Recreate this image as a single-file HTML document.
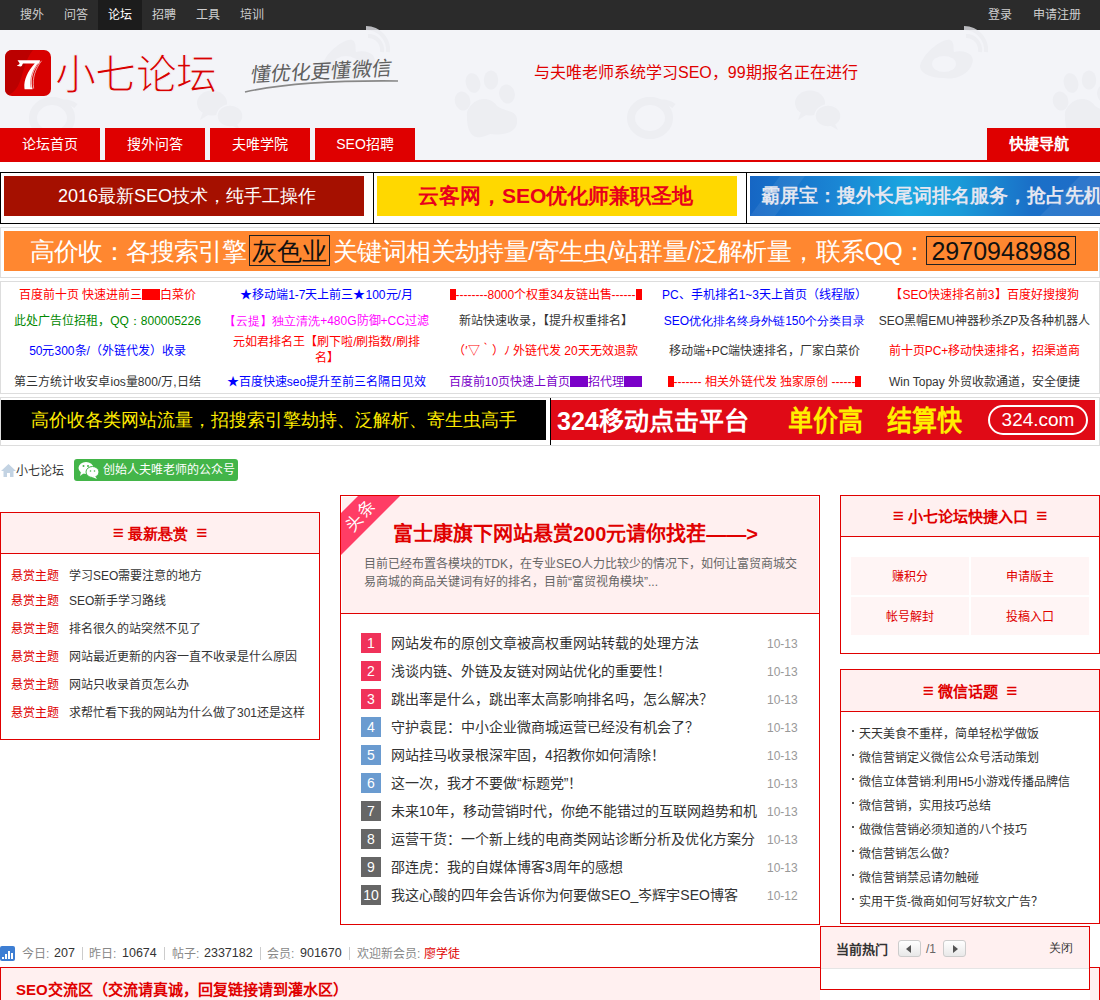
<!DOCTYPE html>
<html lang="zh-CN"><head><meta charset="utf-8">
<style>
*{margin:0;padding:0;box-sizing:border-box}
html,body{width:1100px;height:1000px;overflow:hidden;background:#fff}
body{position:relative;font-family:"Liberation Sans",sans-serif;font-size:12px;color:#333;line-height:14px}
.a{position:absolute;white-space:nowrap}
/* topbar */
#top{position:absolute;left:0;top:0;width:1100px;height:30px;background:#2b2b2b}
#top .it{position:absolute;top:8px;color:#cfcfcf;font-size:12px;line-height:14px}
#top .act{position:absolute;left:98px;top:0;width:44px;height:30px;background:#1c1c1c}
/* header */
#hd{position:absolute;left:0;top:30px;width:1100px;height:130px;background:#f3f4f8;overflow:hidden}
.tab{position:absolute;top:128px;height:32px;width:100px;background:#df0000;color:#fff;font-size:14px;line-height:32px;text-align:center}
#redline{position:absolute;left:0;top:160px;width:1100px;height:2px;background:#df0000}
/* ad row */
.cell{position:absolute;top:172px;height:52px;border:1px solid #000}
.bn{position:absolute;top:176px;height:40px;width:360px;overflow:hidden}
.box{position:absolute;border:1px solid #ddd}
.lk{position:absolute;width:219px;text-align:center;font-size:12px;line-height:16px;white-space:nowrap;padding-top:1px}
/* panels */
.pnl{position:absolute;border:1px solid #e00000;background:#fff}
.ph{position:absolute;left:0;top:0;right:0;background:#fff0f0;border-bottom:1px solid #e00000;color:#e00000;font-weight:bold;font-size:15px;text-align:center}
.eq{font-size:19px;font-weight:normal}
</style></head><body>

<!-- TOP BAR -->
<div id="top">
  <div class="act"></div>
  <span class="it" style="left:20px">搜外</span>
  <span class="it" style="left:64px">问答</span>
  <span class="it" style="left:108px;color:#fff">论坛</span>
  <span class="it" style="left:152px">招聘</span>
  <span class="it" style="left:196px">工具</span>
  <span class="it" style="left:240px">培训</span>
  <span class="it" style="left:988px">登录</span>
  <span class="it" style="left:1033px">申请注册</span>
</div>

<!-- HEADER -->
<div id="hd"></div>
<svg class="a" style="left:0;top:0;opacity:0.75" width="1100" height="160"><g fill="#ebecf1">
  <!-- google g -->
  <ellipse cx="52" cy="118" rx="19" ry="17" fill="none" stroke="#ebecf1" stroke-width="8"/>
  <path d="M58 103 Q 68 100 76 106" stroke="#ebecf1" stroke-width="5" fill="none"/>
  <!-- wechat -->
  <ellipse cx="212" cy="103" rx="15" ry="12.5"/>
  <path d="M203 112 l-3 8 l8 -5 z"/>
  <ellipse cx="230" cy="116" rx="13" ry="11" stroke="#f3f4f8" stroke-width="1.5"/>
  <path d="M237 124 l3 6 l-7 -4 z"/>
  <!-- weibo -->
  <path d="M322 66 C 326 52, 345 38, 352 40 C 357 42, 355 50, 356 52 C 368 49, 378 56, 374 64 C 370 76, 355 80, 346 78 C 330 78, 322 72, 322 66 Z"/>
  <ellipse cx="346" cy="64" rx="12" ry="8" fill="#f3f4f8"/>
  <path d="M368 36 a 14 14 0 0 1 14 16" stroke="#ebecf1" stroke-width="4" fill="none"/>
  <path d="M366 28 a 22 22 0 0 1 22 24" stroke="#ebecf1" stroke-width="4" fill="none"/>
  <!-- paw -->
  <ellipse cx="473" cy="83" rx="7.2" ry="10" transform="rotate(-15 473 83)"/>
  <ellipse cx="491" cy="80" rx="7.2" ry="9.5"/>
  <ellipse cx="507" cy="94" rx="7.7" ry="9.5" transform="rotate(-15 507 94)"/>
  <ellipse cx="462.5" cy="101" rx="7.7" ry="9.5" transform="rotate(-15 462.5 101)"/>
  <path d="M467 112 C 474 96, 490 96, 497 106 C 505 112, 517 110, 517 120 C 518 132, 505 136, 490 134 C 478 140, 466 140, 467 112 Z"/>
</g><g fill="#ebecf1">
  <!-- google g -->
  <ellipse cx="650" cy="118" rx="19" ry="17" fill="none" stroke="#ebecf1" stroke-width="8"/>
  <path d="M656 103 Q 666 100 674 106" stroke="#ebecf1" stroke-width="5" fill="none"/>
  <!-- wechat -->
  <ellipse cx="810" cy="103" rx="15" ry="12.5"/>
  <path d="M801 112 l-3 8 l8 -5 z"/>
  <ellipse cx="828" cy="116" rx="13" ry="11" stroke="#f3f4f8" stroke-width="1.5"/>
  <path d="M835 124 l3 6 l-7 -4 z"/>
  <!-- weibo -->
  <path d="M920 66 C 924 52, 943 38, 950 40 C 955 42, 953 50, 954 52 C 966 49, 976 56, 972 64 C 968 76, 953 80, 944 78 C 928 78, 920 72, 920 66 Z"/>
  <ellipse cx="944" cy="64" rx="12" ry="8" fill="#f3f4f8"/>
  <path d="M966 36 a 14 14 0 0 1 14 16" stroke="#ebecf1" stroke-width="4" fill="none"/>
  <path d="M964 28 a 22 22 0 0 1 22 24" stroke="#ebecf1" stroke-width="4" fill="none"/>
  <!-- paw -->
  <ellipse cx="1071" cy="83" rx="7.2" ry="10" transform="rotate(-15 1071 83)"/>
  <ellipse cx="1089" cy="80" rx="7.2" ry="9.5"/>
  <ellipse cx="1105" cy="94" rx="7.7" ry="9.5" transform="rotate(-15 1105 94)"/>
  <ellipse cx="1060.5" cy="101" rx="7.7" ry="9.5" transform="rotate(-15 1060.5 101)"/>
  <path d="M1065 112 C 1072 96, 1088 96, 1095 106 C 1103 112, 1115 110, 1115 120 C 1116 132, 1103 136, 1088 134 C 1076 140, 1064 140, 1065 112 Z"/>
</g></svg>
<svg class="a" style="left:5px;top:50px" width="46" height="46" viewBox="0 0 46 46">
  <defs><clipPath id="lc"><rect x="0" y="0" width="46" height="46" rx="7" ry="7"/></clipPath></defs>
  <g clip-path="url(#lc)">
    <rect x="0" y="0" width="46" height="46" fill="#d80000"/>
    <path d="M0 0 H28 C 20 9, 18 26, 13 36 C 10 41, 6 44, 2 46 H0 Z" fill="#bb0000"/>
  </g>
  <path d="M12.5 10.3 H35 L34.6 12.6 C 28.5 20, 25.5 28, 27.2 37.3 L27.6 39.2 H19.6 L19.4 37.8 C 18.8 30, 22.5 21.5, 29.8 13.6 H18 C 17 14.5, 17.5 16.6, 15.5 16.4 C 13.5 16.2, 12 15.8, 12 15 C 13.5 15, 14.6 14.2, 14.6 13.2 Z" fill="#fff"/>
  <path d="M36.5 10.8 C 30.5 19, 27 27.5, 28.7 38.6" stroke="#fff" stroke-width="0.6" fill="none"/>
  <path d="M33 13.5 C 27.5 20.5, 24.8 28, 26 37.5" stroke="#d80000" stroke-width="0.5" fill="none"/>
</svg>
<div class="a" style="left:55px;top:50px;font-size:41px;line-height:50px;color:#d80000;letter-spacing:-0.7px;-webkit-text-stroke:1.1px #f3f4f8">小七论坛</div>
<div class="a" style="left:249px;top:62px;font-size:20px;line-height:26px;color:#606060;transform:skewX(-10deg) rotate(-3deg);transform-origin:0 100%">懂优化更懂微信</div>
<svg class="a" style="left:240px;top:76px" width="165" height="20"><path d="M5 16 Q 60 4 158 5" stroke="#888" stroke-width="1.6" fill="none"/></svg>
<div class="a" style="left:534px;top:64px;font-size:16px;line-height:18px;color:#e00000">与夫唯老师系统学习SEO，99期报名正在进行</div>

<!-- NAV -->
<div class="tab" style="left:0">论坛首页</div>
<div class="tab" style="left:105px">搜外问答</div>
<div class="tab" style="left:210px">夫唯学院</div>
<div class="tab" style="left:315px">SEO招聘</div>
<div class="tab" style="left:987px;width:113px;font-weight:bold;font-size:15px;line-height:31px;text-align:left;padding-left:22px">快捷导航</div>
<div id="redline"></div>

<!-- AD ROW 1 -->
<div class="cell" style="left:0;width:374px"></div>
<div class="cell" style="left:373px;width:374px"></div>
<div class="cell" style="left:746px;width:380px"></div>
<div lang="ja" class="bn" style="left:4px;background:#a51000;color:#fff;font-size:18px;line-height:40px;font-weight:300"><span class="a" style="left:54px;top:0">2016最新SEO技术，纯手工操作</span></div>
<div lang="ja" class="bn" style="left:377px;background:#ffd800;color:#e8001c;font-size:21px;line-height:40px;font-weight:bold"><span class="a" style="left:41px;top:0">云客网，SEO优化师兼职圣地</span></div>
<div lang="ja" class="bn" style="left:750px;width:350px;background:linear-gradient(90deg,#1666c4 0%,#1a86d4 25%,#1aa6e0 45%,#1a9ad8 60%,#1a70c8 80%,#1f6cc8 100%);color:#e4e6f0;font-size:19px;line-height:40px;font-weight:bold"><svg class="a" style="left:0;top:0" width="350" height="40"><polygon points="0,40 30,0 55,0 25,40" fill="rgba(255,255,255,0.07)"/><polygon points="290,40 330,0 350,0 350,40" fill="rgba(255,255,255,0.08)"/></svg><span class="a" style="left:11px;top:0">霸屏宝：搜外长尾词排名服务，抢占先机</span></div>

<!-- ORANGE -->
<div class="box" style="left:0;top:227px;width:1100px;height:51px"></div>
<div lang="ja" class="a" style="left:4px;top:231px;width:1094px;height:40px;background:#ff8730;color:#fff;font-size:25px;line-height:40px;font-weight:300">
  <span class="a" style="left:26px;top:0;letter-spacing:-0.95px">高价收：各搜索引擎</span>
  <span class="a" style="left:244.5px;top:4px;width:81px;height:31px;border:1px solid #222;color:#111;line-height:30px;text-align:center">灰色业</span>
  <span class="a" style="left:329px;top:0;letter-spacing:-0.6px">关键词相关劫持量/寄生虫/站群量/泛解析量，联系QQ：</span>
  <span class="a" style="left:922px;top:5px;width:150px;height:29px;border:1px solid #222;color:#111;line-height:28px;text-align:center">2970948988</span>
</div>

<!-- TEXT LINKS -->
<div class="box" style="left:0;top:281px;width:1100px;height:113px"></div>
<div class="lk" style="left:-2px;top:286px;color:#f00">百度前十页 快速进前三<span style="display:inline-block;width:18px;height:11px;background:#f00;vertical-align:-1px"></span>白菜价</div>
<div class="lk" style="left:217px;top:286px;color:#00f">★移动端1-7天上前三★100元/月</div>
<div class="lk" style="left:436px;top:286px;color:#f00"><span style="display:inline-block;width:6px;height:11px;background:#f00;vertical-align:-1px"></span>--------8000个权重34友链出售------<span style="display:inline-block;width:6px;height:11px;background:#f00;vertical-align:-1px"></span></div>
<div class="lk" style="left:655px;top:286px;color:#00f">PC、手机排名1~3天上首页（线程版）</div>
<div class="lk" style="left:875px;top:286px;color:#f00">【SEO快速排名前3】百度好搜搜狗</div>

<div class="lk" style="left:-2px;top:312px;color:#080">此处广告位招租，QQ：800005226</div>
<div class="lk" style="left:217px;top:312px;color:#f0f">【云提】独立清洗+480G防御+CC过滤</div>
<div class="lk" style="left:436px;top:312px;color:#333">新站快速收录，【提升权重排名】</div>
<div class="lk" style="left:655px;top:312px;color:#00f">SEO优化排名终身外链150个分类目录</div>
<div class="lk" style="left:875px;top:312px;color:#333">SEO黑帽EMU神器秒杀ZP及各种机器人</div>

<div class="lk" style="left:-2px;top:342px;color:#00f">50元300条/（外链代发）收录</div>
<div class="lk" style="left:217px;top:334px;color:#f00;white-space:normal;padding:0 10px">元如君排名王【刷下啦/刷指数/刷排名】</div>
<div class="lk" style="left:436px;top:342px;color:#f00">（′▽｀）ﾉ 外链代发 20天无效退款</div>
<div class="lk" style="left:655px;top:342px;color:#333">移动端+PC端快速排名，厂家白菜价</div>
<div class="lk" style="left:875px;top:342px;color:#f00">前十页PC+移动快速排名，招渠道商</div>

<div class="lk" style="left:-2px;top:373px;color:#333">第三方统计收安卓ios量800/万,日结</div>
<div class="lk" style="left:217px;top:373px;color:#00f">★百度快速seo提升至前三名隔日见效</div>
<div class="lk" style="left:436px;top:373px;color:#7a00c8">百度前10页快速上首页<span style="display:inline-block;width:18px;height:11px;background:#7a00c8;vertical-align:-1px"></span>招代理<span style="display:inline-block;width:18px;height:11px;background:#7a00c8;vertical-align:-1px"></span></div>
<div class="lk" style="left:655px;top:373px;color:#f00"><span style="display:inline-block;width:6px;height:11px;background:#f00;vertical-align:-1px"></span>------- 相关外链代发 独家原创 ------<span style="display:inline-block;width:6px;height:11px;background:#f00;vertical-align:-1px"></span></div>
<div class="lk" style="left:875px;top:373px;color:#333">Win Topay 外贸收款通道，安全便捷</div>

<!-- BANNER ROW 2 -->
<div class="box" style="left:0;top:397px;width:1100px;height:49px"></div>
<div lang="ja" class="a" style="left:1px;top:400px;width:545px;height:40px;background:#000;color:#ffec00;font-size:18px;line-height:40px"><span class="a" style="left:30px;top:0">高价收各类网站流量，招搜索引擎劫持、泛解析、寄生虫高手</span></div>
<div class="a" style="left:550px;top:398px;width:1px;height:47px;background:#000"></div>
<div class="a" style="left:551px;top:400px;width:544px;height:40px;background:#e00a16;overflow:hidden">
  <span class="a" style="left:6px;top:0;color:#fff;font-size:25px;line-height:42px;font-weight:bold">324移动点击平台</span>
  <span class="a" style="left:237px;top:0;color:#ffee00;font-size:25px;line-height:42px;font-weight:bold;transform:scaleY(1.15)">单价高</span>
  <span class="a" style="left:336px;top:0;color:#ffee00;font-size:25px;line-height:42px;font-weight:bold;transform:scaleY(1.15)">结算快</span>
  <span class="a" style="left:437px;top:5px;width:100px;height:30px;border:2px solid #fff;border-radius:15px;color:#fff;font-size:19px;line-height:26px;text-align:center">324.com</span>
</div>

<!-- BREADCRUMB -->
<svg class="a" style="left:1px;top:464px" width="15" height="14" viewBox="0 0 15 14"><path d="M7.5 0 L15 7 L12.5 7 L12.5 13 L9 13 L9 9 L6 9 L6 13 L2.5 13 L2.5 7 L0 7 Z" fill="#c3d3e3"/></svg>
<div class="a" style="left:16px;top:464px;color:#333">小七论坛</div>
<div class="a" style="left:74px;top:459px;width:164px;height:22px;background:#43b549;border-radius:3px;color:#fff;line-height:24px">
  <svg class="a" style="left:4px;top:2px" width="22" height="18" viewBox="0 0 22 18"><ellipse cx="8" cy="7" rx="7.5" ry="6" fill="#fff"/><path d="M3 11 L2 15 L6 12 Z" fill="#fff"/><ellipse cx="14.5" cy="11" rx="6.5" ry="5.5" fill="#fff" stroke="#43b549" stroke-width="1"/><path d="M17 15 L19 18 L14 16 Z" fill="#fff"/><circle cx="5.5" cy="5" r="1" fill="#43b549"/><circle cx="10" cy="5" r="1" fill="#43b549"/><circle cx="12.5" cy="10" r="0.8" fill="#43b549"/><circle cx="16.5" cy="10" r="0.8" fill="#43b549"/></svg>
  <span class="a" style="left:29px;top:-1px">创始人夫唯老师的公众号</span>
</div>


<!-- LEFT PANEL -->
<div class="pnl" style="left:0;top:512px;width:320px;height:228px">
  <div class="ph" style="height:41px;line-height:40px"><span class="eq">≡</span> 最新悬赏 &nbsp;<span class="eq">≡</span></div>
</div>
<div class="a" style="left:11px;top:569px;line-height:14px"><span style="color:#e00000">悬赏主题</span><span style="position:absolute;left:58px">学习SEO需要注意的地方</span></div>
<div class="a" style="left:11px;top:594px;line-height:14px"><span style="color:#e00000">悬赏主题</span><span style="position:absolute;left:58px">SEO新手学习路线</span></div>
<div class="a" style="left:11px;top:622px;line-height:14px"><span style="color:#e00000">悬赏主题</span><span style="position:absolute;left:58px">排名很久的站突然不见了</span></div>
<div class="a" style="left:11px;top:650px;line-height:14px"><span style="color:#e00000">悬赏主题</span><span style="position:absolute;left:58px">网站最近更新的内容一直不收录是什么原因</span></div>
<div class="a" style="left:11px;top:678px;line-height:14px"><span style="color:#e00000">悬赏主题</span><span style="position:absolute;left:58px">网站只收录首页怎么办</span></div>
<div class="a" style="left:11px;top:706px;line-height:14px"><span style="color:#e00000">悬赏主题</span><span style="position:absolute;left:58px">求帮忙看下我的网站为什么做了301还是这样</span></div>

<!-- CENTER PANEL -->
<div class="pnl" style="left:340px;top:495px;width:480px;height:430px">
  <div style="position:absolute;left:1px;top:1px;right:1px;height:116px;background:#fff0f0"></div>
  <div style="position:absolute;left:0;top:117px;right:0;height:1px;background:#e00000"></div>
</div>
<svg class="a" style="left:341px;top:496px" width="60" height="60"><polygon points="17,0 59,0 0,59 0,17" fill="#ff3d65"/></svg>
<div class="a" style="left:340px;top:505px;width:42px;height:20px;text-align:center;color:#fff;font-size:17px;line-height:22px;letter-spacing:2px;transform:rotate(-48deg);transform-origin:50% 50%">头条</div>
</div>
<div class="a" style="left:393px;top:521px;color:#e00000;font-size:20px;line-height:26px;font-weight:bold">富士康旗下网站悬赏200元请你找茬——&gt;</div>
<div class="a" style="left:364px;top:554px;width:440px;white-space:normal;color:#666;line-height:18px;padding-top:1px">目前已经布置各模块的TDK，在专业SEO人力比较少的情况下，如何让富贸商城交易商城的商品关键词有好的排名，目前“富贸视角模块”...</div>
<div class="a" style="left:361px;top:633px;width:20px;height:20px;background:#f0325a;color:#fff;font-size:14px;line-height:20px;text-align:center">1</div>
<div class="a" style="left:391px;top:636px;font-size:14px;line-height:14px;color:#333">网站发布的原创文章被高权重网站转载的处理方法</div>
<div class="a" style="left:767px;top:638px;color:#999;line-height:12px">10-13</div>
<div class="a" style="left:361px;top:661px;width:20px;height:20px;background:#f0325a;color:#fff;font-size:14px;line-height:20px;text-align:center">2</div>
<div class="a" style="left:391px;top:664px;font-size:14px;line-height:14px;color:#333">浅谈内链、外链及友链对网站优化的重要性！</div>
<div class="a" style="left:767px;top:666px;color:#999;line-height:12px">10-13</div>
<div class="a" style="left:361px;top:689px;width:20px;height:20px;background:#f0325a;color:#fff;font-size:14px;line-height:20px;text-align:center">3</div>
<div class="a" style="left:391px;top:692px;font-size:14px;line-height:14px;color:#333">跳出率是什么，跳出率太高影响排名吗，怎么解决？</div>
<div class="a" style="left:767px;top:694px;color:#999;line-height:12px">10-13</div>
<div class="a" style="left:361px;top:717px;width:20px;height:20px;background:#6a9bd0;color:#fff;font-size:14px;line-height:20px;text-align:center">4</div>
<div class="a" style="left:391px;top:720px;font-size:14px;line-height:14px;color:#333">守护袁昆：中小企业微商城运营已经没有机会了？</div>
<div class="a" style="left:767px;top:722px;color:#999;line-height:12px">10-13</div>
<div class="a" style="left:361px;top:745px;width:20px;height:20px;background:#6a9bd0;color:#fff;font-size:14px;line-height:20px;text-align:center">5</div>
<div class="a" style="left:391px;top:748px;font-size:14px;line-height:14px;color:#333">网站挂马收录根深牢固，4招教你如何清除！</div>
<div class="a" style="left:767px;top:750px;color:#999;line-height:12px">10-13</div>
<div class="a" style="left:361px;top:773px;width:20px;height:20px;background:#6a9bd0;color:#fff;font-size:14px;line-height:20px;text-align:center">6</div>
<div class="a" style="left:391px;top:776px;font-size:14px;line-height:14px;color:#333">这一次，我才不要做“标题党”！</div>
<div class="a" style="left:767px;top:778px;color:#999;line-height:12px">10-13</div>
<div class="a" style="left:361px;top:801px;width:20px;height:20px;background:#666;color:#fff;font-size:14px;line-height:20px;text-align:center">7</div>
<div class="a" style="left:391px;top:804px;font-size:14px;line-height:14px;color:#333">未来10年，移动营销时代，你绝不能错过的互联网趋势和机</div>
<div class="a" style="left:767px;top:806px;color:#999;line-height:12px">10-13</div>
<div class="a" style="left:361px;top:829px;width:20px;height:20px;background:#666;color:#fff;font-size:14px;line-height:20px;text-align:center">8</div>
<div class="a" style="left:391px;top:832px;font-size:14px;line-height:14px;color:#333">运营干货：一个新上线的电商类网站诊断分析及优化方案分</div>
<div class="a" style="left:767px;top:834px;color:#999;line-height:12px">10-13</div>
<div class="a" style="left:361px;top:857px;width:20px;height:20px;background:#666;color:#fff;font-size:14px;line-height:20px;text-align:center">9</div>
<div class="a" style="left:391px;top:860px;font-size:14px;line-height:14px;color:#333">邵连虎：我的自媒体博客3周年的感想</div>
<div class="a" style="left:767px;top:862px;color:#999;line-height:12px">10-13</div>
<div class="a" style="left:361px;top:885px;width:20px;height:20px;background:#666;color:#fff;font-size:14px;line-height:20px;text-align:center">10</div>
<div class="a" style="left:391px;top:888px;font-size:14px;line-height:14px;color:#333">我这心酸的四年会告诉你为何要做SEO_岑辉宇SEO博客</div>
<div class="a" style="left:767px;top:890px;color:#999;line-height:12px">10-12</div>

<!-- RIGHT PANEL 1 -->
<div class="pnl" style="left:840px;top:495px;width:260px;height:159px">
  <div class="ph" style="height:41px;line-height:40px"><span class="eq">≡</span> 小七论坛快捷入口 &nbsp;<span class="eq">≡</span></div>
</div>
<div class="a" style="left:851px;top:557px;width:118px;height:38px;background:#fff5f5;color:#e00000;text-align:center;line-height:40px">赚积分</div>
<div class="a" style="left:971px;top:557px;width:118px;height:38px;background:#fff5f5;color:#e00000;text-align:center;line-height:40px">申请版主</div>
<div class="a" style="left:851px;top:597px;width:118px;height:38px;background:#fff5f5;color:#e00000;text-align:center;line-height:40px">帐号解封</div>
<div class="a" style="left:971px;top:597px;width:118px;height:38px;background:#fff5f5;color:#e00000;text-align:center;line-height:40px">投稿入口</div>

<!-- RIGHT PANEL 2 -->
<div class="pnl" style="left:840px;top:669px;width:260px;height:255px">
  <div class="ph" style="height:42px;line-height:41px"><span class="eq">≡</span> 微信话题 &nbsp;<span class="eq">≡</span></div>
</div>
<div class="a" style="left:852px;top:730px;width:2px;height:2px;background:#555"></div>
<div class="a" style="left:859px;top:727px;color:#333">天天美食不重样，简单轻松学做饭</div>
<div class="a" style="left:852px;top:754px;width:2px;height:2px;background:#555"></div>
<div class="a" style="left:859px;top:751px;color:#333">微信营销定义微信公众号活动策划</div>
<div class="a" style="left:852px;top:778px;width:2px;height:2px;background:#555"></div>
<div class="a" style="left:859px;top:775px;color:#333">微信立体营销:利用H5小游戏传播品牌信</div>
<div class="a" style="left:852px;top:802px;width:2px;height:2px;background:#555"></div>
<div class="a" style="left:859px;top:799px;color:#333">微信营销，实用技巧总结</div>
<div class="a" style="left:852px;top:826px;width:2px;height:2px;background:#555"></div>
<div class="a" style="left:859px;top:823px;color:#333">做微信营销必须知道的八个技巧</div>
<div class="a" style="left:852px;top:850px;width:2px;height:2px;background:#555"></div>
<div class="a" style="left:859px;top:847px;color:#333">微信营销怎么做？</div>
<div class="a" style="left:852px;top:874px;width:2px;height:2px;background:#555"></div>
<div class="a" style="left:859px;top:871px;color:#333">微信营销禁忌请勿触碰</div>
<div class="a" style="left:852px;top:898px;width:2px;height:2px;background:#555"></div>
<div class="a" style="left:859px;top:895px;color:#333">实用干货-微商如何写好软文广告？</div>

<!-- STATS -->
<div class="a" style="left:0;top:946px;width:15px;height:15px;background:#3d7ed3;border-radius:2px">
  <div style="position:absolute;left:2px;top:11px;width:2px;height:2px;background:#fff"></div>
  <div style="position:absolute;left:5px;top:8px;width:2px;height:5px;background:#fff"></div>
  <div style="position:absolute;left:8px;top:5px;width:2px;height:8px;background:#fff"></div>
  <div style="position:absolute;left:11px;top:7px;width:2px;height:6px;background:#fff"></div>
</div>
<div class="a" style="left:22px;top:947px;color:#888">今日:</div><div class="a" style="left:54px;top:947px;color:#333;font-size:12.5px;line-height:12px">207</div>
<div class="a" style="left:82px;top:947px;width:1px;height:13px;background:#ccc"></div>
<div class="a" style="left:89px;top:947px;color:#888">昨日:</div><div class="a" style="left:122px;top:947px;color:#333;font-size:12.5px;line-height:12px">10674</div>
<div class="a" style="left:164px;top:947px;width:1px;height:13px;background:#ccc"></div>
<div class="a" style="left:172px;top:947px;color:#888">帖子:</div><div class="a" style="left:204px;top:947px;color:#333;font-size:12.5px;line-height:12px">2337182</div>
<div class="a" style="left:260px;top:947px;width:1px;height:13px;background:#ccc"></div>
<div class="a" style="left:267px;top:947px;color:#888">会员:</div><div class="a" style="left:300px;top:947px;color:#333;font-size:12.5px;line-height:12px">901670</div>
<div class="a" style="left:349px;top:947px;width:1px;height:13px;background:#ccc"></div>
<div class="a" style="left:357px;top:947px;color:#888">欢迎新会员:</div><div class="a" style="left:424px;top:947px;color:#e00000">廖学徒</div>

<!-- SEO BAR -->
<div class="a" style="left:0;top:967px;width:1100px;height:40px;border:1px solid #e00000;background:#fff0f0"></div>
<div class="a" style="left:16px;top:981px;color:#e00000;font-weight:bold;font-size:15px;line-height:17px">SEO交流区（交流请真诚，回复链接请到灌水区）</div>

<!-- POPUP -->
<div class="a" style="left:820px;top:926px;width:270px;height:74px;background:#fff"></div>
<div class="a" style="left:820px;top:926px;width:270px;height:64px;border:1px solid #e00000;background:#fff">
  <div style="position:absolute;left:0;top:0;right:0;height:42px;background:#fff0f0;border-bottom:1px solid #e5e5e5"></div>
</div>
<div class="a" style="left:836px;top:942px;font-weight:bold;font-size:13px;line-height:16px;color:#333">当前热门</div>
<div class="a" style="left:898px;top:940px;width:23px;height:17px;border:1px solid #ccc;border-radius:3px;background:linear-gradient(#fff,#e8e8e8)"><div style="position:absolute;left:7px;top:4px;width:0;height:0;border-top:4px solid transparent;border-bottom:4px solid transparent;border-right:5px solid #555"></div></div>
<div class="a" style="left:926px;top:943px;color:#666;line-height:12px">/1</div>
<div class="a" style="left:943px;top:940px;width:23px;height:17px;border:1px solid #ccc;border-radius:3px;background:linear-gradient(#fff,#e8e8e8)"><div style="position:absolute;left:9px;top:4px;width:0;height:0;border-top:4px solid transparent;border-bottom:4px solid transparent;border-left:5px solid #555"></div></div>
<div class="a" style="left:1049px;top:941px;color:#333">关闭</div>

</body></html>
